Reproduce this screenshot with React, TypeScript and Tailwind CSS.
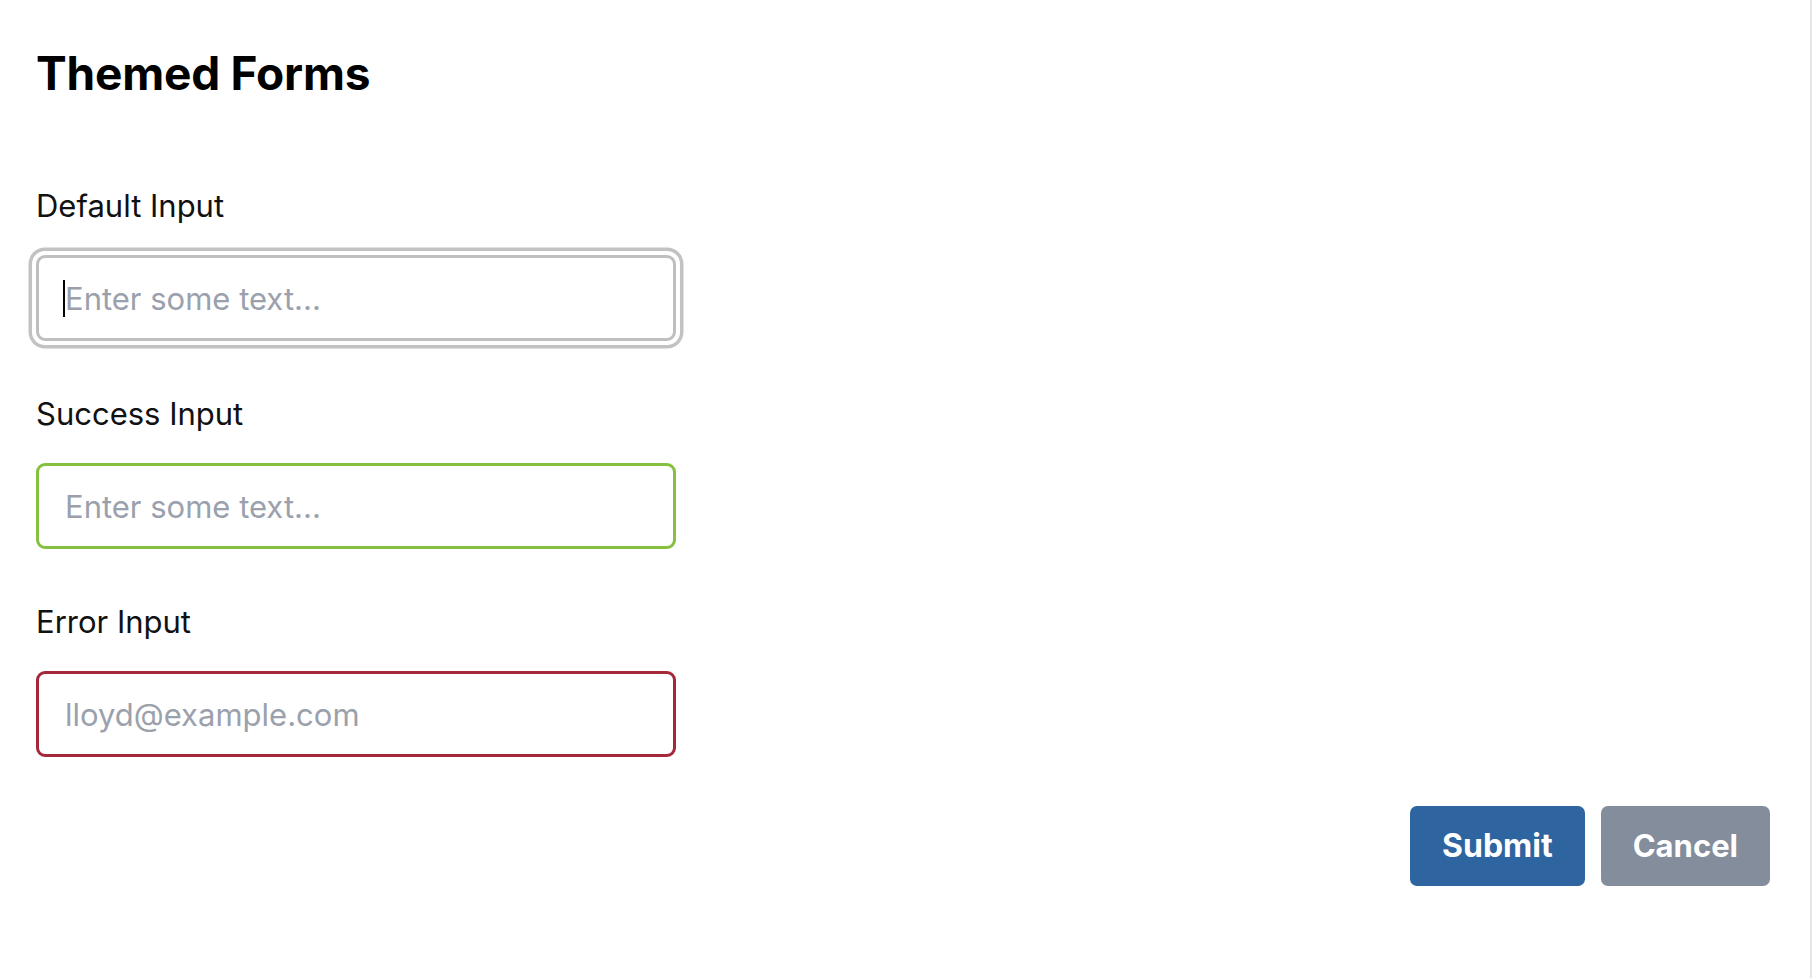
import { useState } from 'react';

type Tone = 'default' | 'success' | 'error';

interface FieldPropsType {
  label: string;
  placeholder: string;
  tone: Tone;
}

const toneClass: Record<Tone, string> = {
  default:
    'border-[#bfbfbf] shadow-[0_0_0_4px_#ffffff,0_0_0_7.5px_#c2c2c2]',
  success: 'border-[#86c03f]',
  error: 'border-[#a5283b]',
};

const Field: React.FC<FieldPropsType> = ({ label, placeholder, tone }) => {
  const [value, setValue] = useState('');

  return (
    <div className="flex flex-col">
      <label className="text-[31px] leading-[36px] text-[#111111]">{label}</label>
      <div className="relative mt-[31px] w-[640px]">
        <input
          type="text"
          value={value}
          onChange={(e) => setValue(e.target.value)}
          placeholder={placeholder}
          className={`h-[86px] w-full rounded-[9px] border-[3.5px] bg-white pl-[26px] text-[31px] text-[#111111] outline-none placeholder:text-[#9ba1ac] ${toneClass[tone]}`}
        />
        {tone === 'default' && (
          <span className="absolute left-[27px] top-[25px] h-[37px] w-[2px] bg-black" />
        )}
      </div>
    </div>
  );
};

export default function App() {
  return (
    <div className="min-h-screen w-full border-r-2 border-[#e6e6e6] bg-white font-['Inter','Noto_Sans',sans-serif] text-black">
      <div className="pl-[36px] pr-[40px] pt-[45px]">
        <h1 className="text-[46px] font-bold leading-[56px] tracking-[-0.2px]">Themed Forms</h1>

        <div className="mt-[87px] flex flex-col gap-[55px]">
          <Field label="Default Input" placeholder="Enter some text..." tone="default" />
          <Field label="Success Input" placeholder="Enter some text..." tone="success" />
          <Field label="Error Input" placeholder="lloyd@example.com" tone="error" />
        </div>

        <div className="mt-[49px] flex justify-end gap-[16px]">
          <button className="h-[80px] rounded-[7px] bg-[#2e64a0] px-[32px] text-[32px] font-bold text-white">
            Submit
          </button>
          <button className="h-[80px] rounded-[7px] bg-[#838d9c] px-[32px] text-[31px] font-bold text-white">
            Cancel
          </button>
        </div>
      </div>
    </div>
  );
}
